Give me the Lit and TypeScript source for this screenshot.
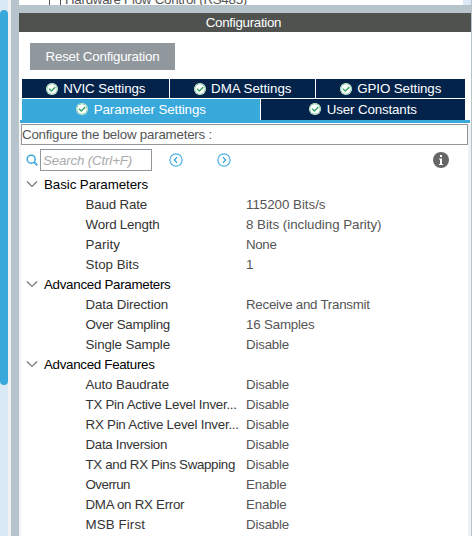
import { LitElement, html, css } from "lit";
import { customElement } from "lit/decorators.js";
import { styleMap } from "lit/directives/style-map.js";

/** A label and the width in pixels that it fills. */
type Label = [string, number];

const GROUPS: { title: Label; rows: [Label, Label][] }[] = [
  { title: ["Basic Parameters", 104], rows: [
    [["Baud Rate", 61.5], ["115200 Bits/s", 79.5]],
    [["Word Length", 74], ["8 Bits (including Parity)", 135.5]],
    [["Parity", 34.5], ["None", 30.5]],
    [["Stop Bits", 53.5], ["1", 7]],
  ] },
  { title: ["Advanced Parameters", 126.5], rows: [
    [["Data Direction", 82.5], ["Receive and Transmit", 124]],
    [["Over Sampling", 84.5], ["16 Samples", 68.5]],
    [["Single Sample", 84.5], ["Disable", 43]],
  ] },
  { title: ["Advanced Features", 110.5], rows: [
    [["Auto Baudrate", 83.5], ["Disable", 43]],
    [["TX Pin Active Level Inver...", 152], ["Disable", 43]],
    [["RX Pin Active Level Inver...", 154], ["Disable", 43]],
    [["Data Inversion", 81.5], ["Disable", 43]],
    [["TX and RX Pins Swapping", 149.5], ["Disable", 43]],
    [["Overrun", 44.5], ["Enable", 40.5]],
    [["DMA on RX Error", 99.5], ["Enable", 40.5]],
    [["MSB First", 59.5], ["Disable", 43]],
  ] },
];

const SIZE = "13.33px";
const pen = document.createElement("canvas").getContext("2d")!;

/** Text whose tracking is set so that it fills the label's width. */
const label = ([text, width]: Label, font = SIZE) => {
  pen.font = `${font} "Liberation Sans"`;
  const gap = (width - pen.measureText(text).width) / text.length;
  return html`<span class="label" style=${styleMap({ letterSpacing: `${gap.toFixed(3)}px` })}>${text}</span>`;
};

const check = html`<svg width="12" height="12" viewBox="0 0 12 12">
  <circle cx="6" cy="6" r="6" fill="#eaf7ef"/>
  <circle cx="6" cy="6" r="5.2" fill="#fff" stroke="#8ed0a8" stroke-width="1"/>
  <path d="M3 5.8 L5.3 8 L9.3 4.1" fill="none" stroke="#3fa96c" stroke-width="1.5"/></svg>`;

const nav = (d: string) => html`<svg width="14" height="14" viewBox="0 0 14 14">
  <circle cx="7" cy="7" r="6.1" fill="none" stroke="#4bb2e0" stroke-width="1.2"/>
  <path d=${d} fill="none" stroke="#39a9dc" stroke-width="1.3"/></svg>`;

@customElement("app-root")
export class AppRoot extends LitElement {
  static styles = css`
    :host { display: flex; width: 472px; height: 536px; overflow: hidden; background: #fff;
      font: 13.33px/20px "Liberation Sans", Arial, sans-serif; color: #333; }
    * { box-sizing: border-box; }
    svg { display: block; flex: none; }
    .label { white-space: pre; }
    .scroll { width: 8px; background: #dae9f6; padding-top: 10px; flex: none; }
    .thumb { height: 375px; border-radius: 4px; background: #39a9dc; }
    .gutter { width: 3px; background: #f0f0f0; flex: none; }
    .sash { width: 8px; background: #b8c4cb; flex: none; }
    .main { width: 452px; flex: none; display: flex; flex-direction: column; }
    .edge { width: 1px; background: #b8c4cb; flex: none; }
    .above { height: 5px; flex: none; display: flex; align-items: flex-end; overflow: hidden; }
    .box { width: 12px; height: 5px; margin-left: 30px; border: solid #555; border-width: 0 1px; }
    .above .name { height: 20px; margin: 0 0 -5px 4px; color: #555; flex: 1; }
    .above .track { width: 8px; height: 5px; background: #dae9f6; }
    .split { height: 8px; background: #b8c4cb; flex: none; }
    .title { height: 19px; background: #4f524f; color: #fff; display: flex; justify-content: center;
      line-height: 19px; padding-right: 3px; flex: none; }
    .reset { width: 145px; height: 27px; margin: 11px 0 9px 11px; background: #91989d; color: #fff;
      display: flex; align-items: center; padding-left: 15.5px; flex: none; }
    .tabs { display: grid; gap: 1px; margin: 0 6px 0 3px; height: 41px; color: #fff; flex: none; grid-template-rows: 19px 21px; }
    .line { display: grid; gap: 1px; }
    .three { grid-template-columns: 147px 145px 1fr; }
    .two { grid-template-columns: 238px 1fr; }
    .tab { background: #03234b; display: flex; align-items: center; justify-content: center; gap: 5.5px; line-height: 19px; }
    .tab.on { background: #39a9dc; }
    .two .tab { padding-bottom: 1px; }
    .rule { height: 3px; margin: 0 1px; background: #39a9dc; flex: none; }
    .panel { flex: 1; border: solid #f4f4f4; border-width: 0 3px 0 2px; border-right-color: #eef0f2; margin-top: 1px; }
    .hint { height: 21px; border: 1px solid #91989d; line-height: 19px; color: #555; }
    .tools { display: flex; align-items: center; height: 30px; padding-left: 5px; }
    .search { width: 112px; height: 22px; margin: 0 17px 0 2px; border: 1px solid #91989d; color: #aaa;
      font-style: italic; padding-left: 2px; line-height: 21px; }
    .next { margin-left: 34px; }
    .info { margin-left: 202px; }
    .head, .row { height: 20px; display: flex; align-items: center; }
    .head { color: #000; padding-left: 5px; gap: 6px; }
    .head svg { margin-top: -2px; }
    .row { padding-left: 64.5px; }
    .key { width: 160.5px; }
    .value { color: #555; }
  `;

  private tab(text: Label, on = false) {
    return html`<div class="tab ${on ? "on" : ""}">${check}${label(text)}</div>`;
  }

  render() {
    return html`
      <div class="scroll"><div class="thumb"></div></div>
      <div class="gutter"></div>
      <div class="sash"></div>
      <div class="main">
        <div class="above">
          <div class="box"></div>
          <div class="name">${label(["Hardware Flow Control (RS485)", 182])}</div>
          <div class="track"></div>
        </div>
        <div class="split"></div>
        <div class="title">${label(["Configuration", 75.5])}</div>
        <div class="reset">${label(["Reset Configuration", 114])}</div>
        <div class="tabs">
          <div class="line three">
            ${this.tab(["NVIC Settings", 82])}${this.tab(["DMA Settings", 81])}${this.tab(["GPIO Settings", 84])}
          </div>
          <div class="line two">
            ${this.tab(["Parameter Settings", 112], true)}${this.tab(["User Constants", 90])}
          </div>
        </div>
        <div class="rule"></div>
        <div class="panel">
          <div class="hint">${label(["Configure the below parameters :", 190])}</div>
          <div class="tools">
            <svg width="12" height="12" viewBox="0 0 12 12">
              <circle cx="5.2" cy="5.2" r="4" fill="none" stroke="#39a9dc" stroke-width="1.5"/>
              <path d="M8.2 8.2 L11.3 11.3" stroke="#39a9dc" stroke-width="1.7"/></svg>
            <div class="search">${label(["Search (Ctrl+F)", 89], `italic ${SIZE}`)}</div>
            ${nav("M8 4.3 L5.3 7 L8 9.7")}
            <div class="next">${nav("M6 4.3 L8.7 7 L6 9.7")}</div>
            <svg class="info" width="16" height="16" viewBox="0 0 16 16">
              <circle cx="8" cy="8" r="8" fill="#666"/>
              <path d="M7 3h2v2H7z M6 6.5h3V12h1v1H6v-1h1V7.5H6z" fill="#fff"/></svg>
          </div>
          ${GROUPS.map(g => html`
            <div class="head">
              <svg width="12" height="12" viewBox="0 0 12 12">
                <path d="M1 3.5 L6 8.5 L11 3.5" fill="none" stroke="#777" stroke-width="1.2"/></svg>
              ${label(g.title)}
            </div>
            ${g.rows.map(([k, v]) => html`
              <div class="row"><div class="key">${label(k)}</div><div class="value">${label(v)}</div></div>`)}`)}
        </div>
      </div>
      <div class="edge"></div>`;
  }
}
